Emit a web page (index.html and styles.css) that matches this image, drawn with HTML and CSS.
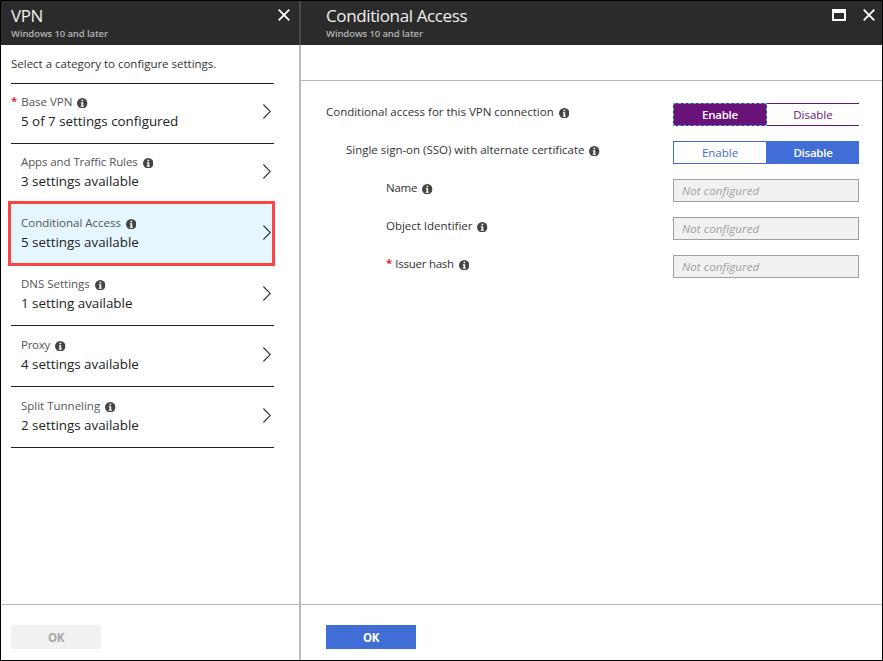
FILE: index.html
```html
<!DOCTYPE html>
<html lang="en">
<head>
<meta charset="utf-8">
<title>VPN</title>
<link rel="stylesheet" href="styles.css">
</head>
<body>
<svg class="defs" width="0" height="0">
  <symbol id="info" viewBox="0 0 10 10"><circle cx="5" cy="5" r="5" fill="#444"/><path d="M4.3 1.7h1.6v1.4H4.3zM3.6 4h2.3v3.3h.7v1H3.5v-1h.8V5h-.7z" fill="#fff"/></symbol>
  <symbol id="chevron" viewBox="0 0 8 15"><path d="M.4.5 7.3 7.5.4 14.5" fill="none" stroke="#333" stroke-width="1.1"/></symbol>
  <symbol id="close" viewBox="0 0 12 12"><path d="M.7.7 11.3 11.3M11.3.7.7 11.3" fill="none" stroke="#fff" stroke-width="1.8"/></symbol>
  <symbol id="maximize" viewBox="0 0 14 12"><path fill-rule="evenodd" d="M0 0h14v12H0zM2 4v6h10V4z" fill="#fff"/></symbol>
</svg>
<div class="window">
  <section class="blade blade-left">
    <header class="head">
      <div><h1>VPN</h1><p>Windows 10 and later</p></div>
      <div class="controls"><svg class="close"><use href="#close"/></svg></div>
    </header>
    <div class="body">
      <p class="intro">Select a category to configure settings.</p>
      <ul class="list">
        <li class="row compact">
          <div><div class="name required"><i class="star">*</i><span>Base VPN</span><svg class="info"><use href="#info"/></svg></div><div class="value">5 of 7 settings configured</div></div>
          <svg class="chevron"><use href="#chevron"/></svg>
        </li>
        <li class="row compact">
          <div><div class="name"><span class="snug">Apps and Traffic Rules</span><svg class="info"><use href="#info"/></svg></div><div class="value">3 settings available</div></div>
          <svg class="chevron"><use href="#chevron"/></svg>
        </li>
        <li class="row selected">
          <div><div class="name"><span>Conditional Access</span><svg class="info"><use href="#info"/></svg></div><div class="value">5 settings available</div></div>
          <svg class="chevron"><use href="#chevron"/></svg>
        </li>
        <li class="row">
          <div><div class="name"><span>DNS Settings</span><svg class="info"><use href="#info"/></svg></div><div class="value">1 setting available</div></div>
          <svg class="chevron"><use href="#chevron"/></svg>
        </li>
        <li class="row">
          <div><div class="name"><span class="tight">Proxy</span><svg class="info"><use href="#info"/></svg></div><div class="value">4 settings available</div></div>
          <svg class="chevron"><use href="#chevron"/></svg>
        </li>
        <li class="row">
          <div><div class="name"><span>Split Tunneling</span><svg class="info"><use href="#info"/></svg></div><div class="value">2 settings available</div></div>
          <svg class="chevron"><use href="#chevron"/></svg>
        </li>
      </ul>
    </div>
    <footer class="foot"><button class="ok" disabled>OK</button></footer>
  </section>
  <section class="blade blade-right">
    <header class="head">
      <div><h1>Conditional Access</h1><p>Windows 10 and later</p></div>
      <div class="controls"><svg class="maximize"><use href="#maximize"/></svg><svg class="close"><use href="#close"/></svg></div>
    </header>
    <div class="toolbar"></div>
    <div class="body form">
      <div class="field">
        <div class="label"><span>Conditional access for this VPN connection</span><svg class="info"><use href="#info"/></svg></div>
        <div class="toggle purple"><span class="on">Enable</span><span>Disable</span></div>
      </div>
      <div class="field">
        <div class="label indent-1"><span>Single sign-on (SSO) with alternate certificate</span><svg class="info"><use href="#info"/></svg></div>
        <div class="toggle blue"><span>Enable</span><span class="on">Disable</span></div>
      </div>
      <div class="field">
        <div class="label indent-2"><span class="tight">Name</span><svg class="info"><use href="#info"/></svg></div>
        <div class="input">Not configured</div>
      </div>
      <div class="field">
        <div class="label indent-2"><span>Object Identifier</span><svg class="info"><use href="#info"/></svg></div>
        <div class="input">Not configured</div>
      </div>
      <div class="field">
        <div class="label indent-2"><i class="star">*</i><span class="tight">Issuer hash</span><svg class="info"><use href="#info"/></svg></div>
        <div class="input">Not configured</div>
      </div>
    </div>
    <footer class="foot"><button class="ok">OK</button></footer>
  </section>
</div>
</body>
</html>
```
FILE: styles.css
```css
* { box-sizing: border-box; margin: 0; padding: 0; }
body { font: 11.5px/16px "Open Sans", "Noto Sans", sans-serif; color: #333; letter-spacing: -.01px; }
svg { display: block; flex: none; }
.defs { position: absolute; }
.window { display: flex; width: 883px; height: 661px; border: 1px solid #000; background: #fff; }
.blade { display: flex; flex-direction: column; }
.blade-left { width: 298px; }
.blade-right { flex: 1; border-left: 2px solid #b9b9b9; }

.head { display: flex; justify-content: space-between; height: 44px; padding: 4px 9px 0 10px; background: #2b2b2b; color: #fff; }
.blade-right .head { margin-left: -2px; padding: 4px 7px 0 25px; border-left: 2px solid #484848; }
.head h1 { font-size: 17px; line-height: 22px; font-weight: 400; color: #f0f0f0; letter-spacing: -.38px; }
.head p { font-size: 9.5px; line-height: 14px; font-weight: 600; color: #b4b4b4; letter-spacing: -.1px; }
.controls { display: flex; gap: 17px; padding-top: 4px; }
.close { width: 12px; height: 12px; }
.maximize { width: 14px; height: 12px; }

.body { flex: 1; }
.intro { padding: 11px 10px 11px; }
.list { width: 263px; margin-left: 10px; list-style: none; border-top: 1px solid #222; }
.row { display: flex; justify-content: space-between; height: 61px; padding: 11px 3px 0 10px; border-bottom: 1px solid #222; }
.row.compact { height: 60px; padding-top: 10px; }
.row.selected { position: relative; background: #e5f6ff; }
.row.selected::after { content: ""; position: absolute; inset: -3px -1px -2px -3px; border: 3px solid #ff4242; }
.name, .label { display: flex; align-items: center; color: #555; }
.name .info, .label .info { width: 10.5px; height: 10.5px; margin: 2px 0 0 5px; }
.value { margin-top: 1px; font-size: 13.4px; line-height: 20px; color: #222; letter-spacing: -.02px; }
.star { margin: -2px 3px 0 0; font-style: normal; font-weight: 600; color: #e00b1c; }
.name.required { margin-left: -10px; }
.name .star { margin-right: 4px; }
.chevron { width: 8px; height: 15px; margin-top: 10px; }
.snug { letter-spacing: -.1px; }
.tight { letter-spacing: -.25px; }

.toolbar { height: 36px; border-bottom: 1px solid #b9b9b9; }
.form { display: flex; flex-direction: column; gap: 15px; padding: 22px 23px 0 25px; }
.field { display: flex; justify-content: space-between; height: 23px; }
.label { height: 18px; color: #333; }
.indent-1 { padding-left: 20px; }
.indent-2 { padding-left: 60px; }
.toggle { display: grid; grid-template-columns: 94px 92px; width: 186px; height: 23px; line-height: 22px; text-align: center; }
.toggle span { height: 23px; border: 1px solid; }
.purple span { border-width: 1px 0; border-color: #68127a; color: #68127a; }
.purple .on { border: 1px dashed #4db3e6; background: #68127a; color: #fff; }
.blue span { border-color: #406dd6; color: #406dd6; }
.blue .on { background: #406dd6; color: #fff; }
.purple .on, .blue .on { font-weight: 600; letter-spacing: -.25px; }
.input { width: 186px; height: 23px; padding-left: 8px; border: 1px solid #a0a0a0; background: #f1f1f1; font-style: italic; line-height: 22px; color: #a0a0a0; letter-spacing: .12px; }

.foot { height: 56px; padding: 20px 10px 0; border-top: 1px solid #b9b9b9; }
.blade-right .foot { padding-left: 25px; }
.ok { display: block; width: 90px; height: 24px; border: 0; background: #406dd6; color: #fff; font: 700 11.5px/25px "Open Sans", "Noto Sans", sans-serif; letter-spacing: -.3px; }
.ok:disabled { background: #f1f1f1; color: #a6a6a6; }
```
